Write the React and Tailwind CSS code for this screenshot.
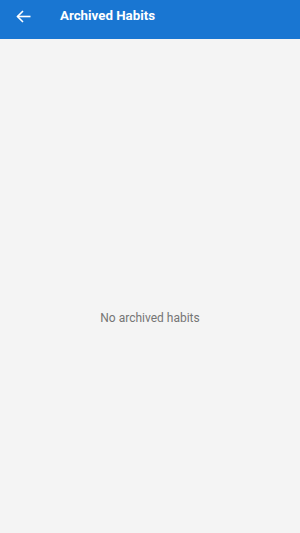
import React from "react";

export default function App() {
  return (
    <div className="w-[300px] h-[533px] bg-[#f4f4f4] flex flex-col" style={{ fontFamily: "Roboto, 'Liberation Sans', sans-serif" }}>
      <div className="h-[39px] bg-[#1976d2] flex items-center pb-[7px] shrink-0">
        <div className="w-[60px] pl-[16px] flex items-center">
          <svg width="15" height="13" viewBox="0 0 15 13" fill="none" stroke="white" strokeWidth="1.6">
            <path d="M14.5 6.5H1.5" />
            <path d="M7 1L1.5 6.5L7 12" />
          </svg>
        </div>
        <span className="text-white text-[13.3px] font-bold">Archived Habits</span>
      </div>
      <div className="flex-1 flex justify-center pt-[270px]">
        <span className="text-[12px] text-[#757575]">No archived habits</span>
      </div>
    </div>
  );
}
